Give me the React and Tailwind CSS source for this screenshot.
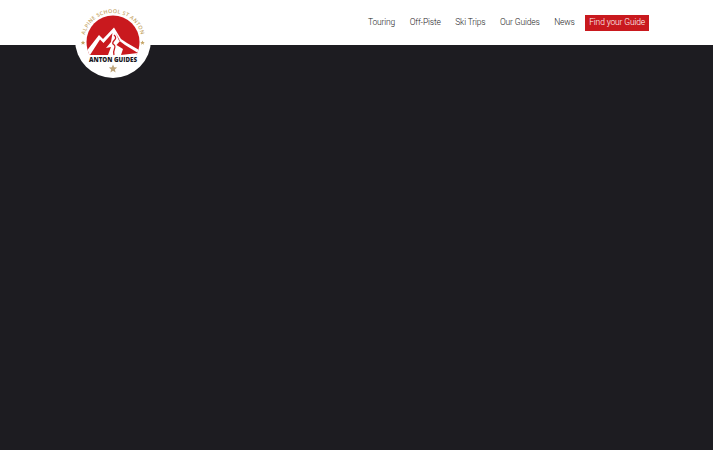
import React from 'react';

const links = ['Touring', 'Off-Piste', 'Ski Trips', 'Our Guides', 'News'];

const Logo = () => (
  <svg viewBox="0 0 76 76" className="absolute left-[75px] top-[2px] w-[76px] h-[76px]">
    <defs>
      <path id="ring" d="M9 40a29 29 0 0 1 58 0" />
      <clipPath id="disc">
        <path d="M11.500 40a26.500 26.500 0 0 1 53 0c0 4-1 9-3 13H14.500c-2-4-3-9-3-13z" />
      </clipPath>
    </defs>
    <circle cx="38" cy="38" r="38" fill="#fff" />
    <path d="M11.500 40a26.500 26.500 0 0 1 53 0c0 4-1 9-3 13H14.500c-2-4-3-9-3-13z" fill="#c9191e" />
    <g clipPath="url(#disc)">
      <path d="M10 51 L24 33 L28 37 L39 25.500 L46 37 L52 41 L66 49 L66 55 L10 55 Z" fill="#fff" />
      <path d="M15 53 L25 37.500 L28.500 41 L37.500 31 L36 40 L31 46 L36 45 L33 53 Z" fill="#c9191e" />
      <path d="M40.500 30.500 L44 38.500 L50 43 L63 51 L46 53 L48 47 L41.500 43 L45 39 Z" fill="#c9191e" />
    </g>
    <path d="M39 33 C44 37 36 39 38 42 C43 45 37 47 39 53" fill="none" stroke="#c9191e" strokeWidth="1.300" />
    <text fontSize="5.300" fontWeight="600" letterSpacing=".35" fill="#c5a566" fontFamily="'Open Sans', sans-serif">
      <textPath href="#ring" startOffset="50%" textAnchor="middle">ALPINE SCHOOL ST ANTON</textPath>
    </text>
    <text x="38" y="60" textAnchor="middle" fontSize="6.200" fontWeight="800" fill="#1b1a1f" fontFamily="'Open Sans', sans-serif">ANTON GUIDES</text>
    <path d="M38 62.500l1.150 2.800 3 .2-2.300 1.950.75 2.950L38 68.800l-2.600 1.600.75-2.950-2.300-1.950 3-.2z" fill="#bda47a" />
    <path d="M8 38.500l.7 1.500 1.600.1-1.250 1 .4 1.600L8 41.800l-1.450.9.400-1.600-1.250-1 1.600-.1z" fill="#c5a566" />
    <path d="M67.500 38.500l.7 1.500 1.600.1-1.250 1 .4 1.600-1.450-.9-1.450.9.400-1.600-1.250-1 1.600-.1z" fill="#c5a566" />
  </svg>
);

export default function App() {
  return (
    <div className="relative w-[720px] h-[450px] overflow-hidden bg-white font-['Roboto',sans-serif]">
      <div className="w-[713px] h-full flex flex-col">
        <header className="h-[45px] shrink-0 bg-white flex items-center justify-end pr-[64px]">
          <nav className="flex items-center gap-[14.500px] text-[8.500px] font-light text-[#222] tracking-[-0.15px]">
            {links.map((l) => (
              <a key={l} href="#">{l}</a>
            ))}
            <a href="#" className="ml-[-4px] bg-[#c9191e] text-white px-[4px] h-[16px] flex items-center">Find your Guide</a>
          </nav>
        </header>
        <main className="flex-1 bg-[#1d1c21]" />
      </div>
      <Logo />
    </div>
  );
}
